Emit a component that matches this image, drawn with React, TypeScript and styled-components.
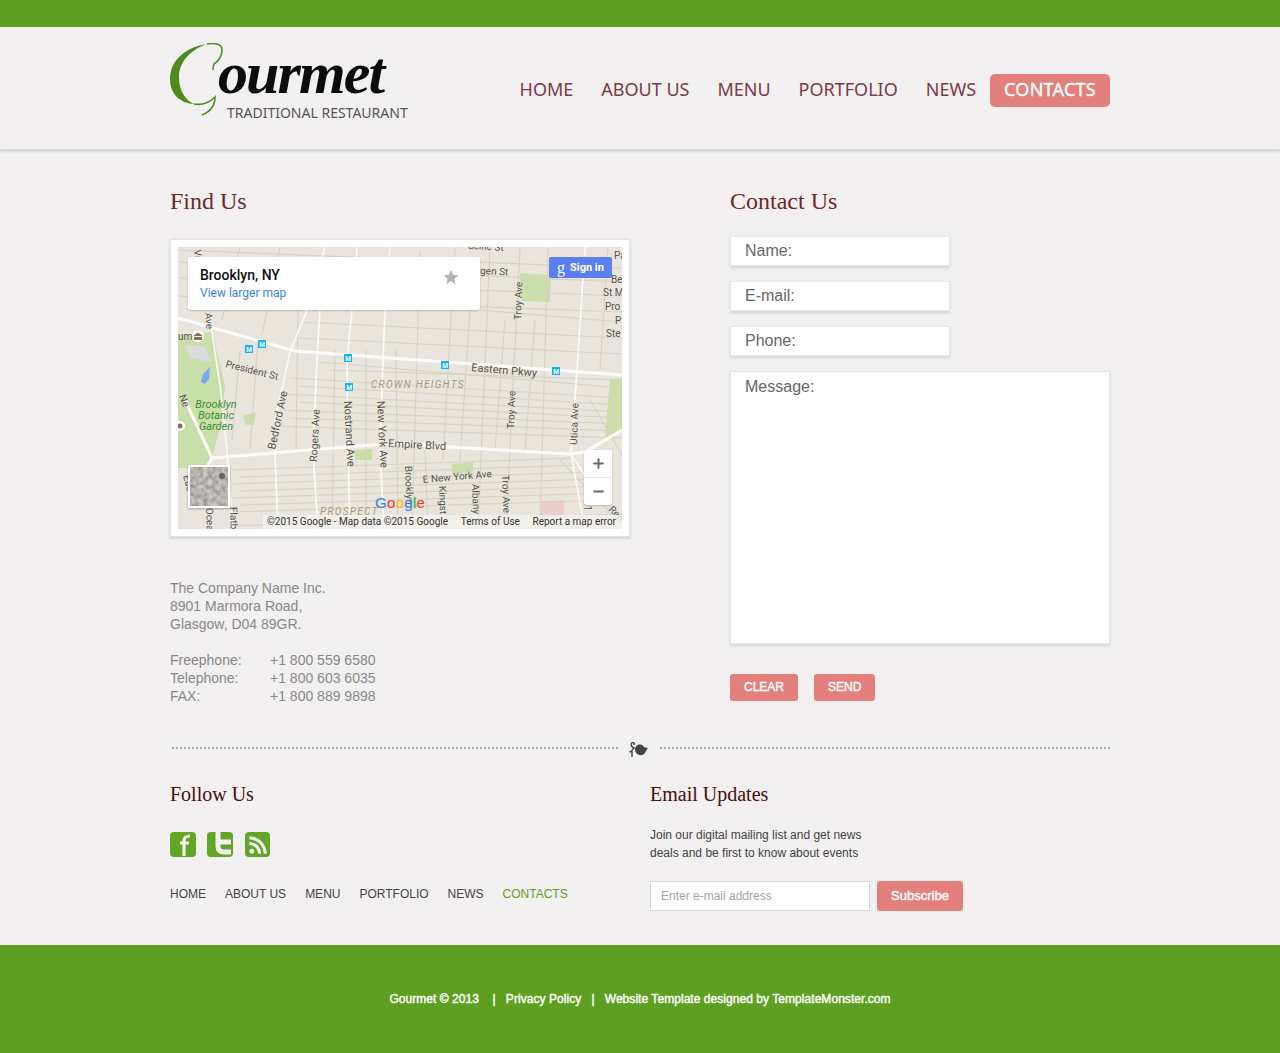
import * as React from 'react';
import styled, { createGlobalStyle } from 'styled-components';
import { Plus, Minus } from 'lucide-react';
import { FaRss } from 'react-icons/fa';

const GlobalStyle = createGlobalStyle`
  html, body {
    margin: 0;
    padding: 0;
    background: #f2f0f1;
    font-family: 'Liberation Sans', Arial, sans-serif;
  }
  * { box-sizing: border-box; }
`;

const TopBar = styled.div`
  height: 27px;
  background: #5e9f21;
`;

const Header = styled.header`
  height: 123px;
  background: #f2f0f1;
  border-bottom: 1px solid #e2e0e1;
  box-shadow: 0 1px 3px rgba(0, 0, 0, 0.18);
`;

const Wrap = styled.div`
  width: 940px;
  margin: 0 auto;
`;

const HeaderRow = styled(Wrap)`
  display: flex;
  justify-content: space-between;
  align-items: flex-start;
`;

const Logo = styled.div`
  position: relative;
  width: 240px;
  height: 94px;
  padding: 16px 0 0 48px;
`;

const LogoSwash = styled.svg`
  position: absolute;
  left: 0;
  top: 16px;
`;

const LogoName = styled.div`
  font: italic bold 60px/60px 'Liberation Serif', 'Times New Roman', serif;
  letter-spacing: -1.9px;
  color: #0c0c0c;
`;

const LogoTag = styled.div`
  margin: 1px 0 0 9px;
  font: 14px/18px 'Noto Sans', sans-serif;
  color: #555;
  white-space: nowrap;
`;

const Nav = styled.nav`
  display: flex;
  margin-top: 47px;
`;

const NavItem = styled.a<{ $active?: boolean }>`
  height: 33px;
  padding: 0 14px;
  font: 18px/31px 'Noto Sans', sans-serif;
  color: ${p => (p.$active ? '#fff' : '#7b3a45')};
  background: ${p => (p.$active ? '#e3807d' : 'transparent')};
  border-radius: 5px;
  white-space: nowrap;
  letter-spacing: ${p => (p.$active ? '0.25px' : '0')};
  -webkit-text-stroke: ${p => (p.$active ? '0.35px #fff' : '0')};
`;

const Columns = styled(Wrap)`
  display: flex;
  justify-content: space-between;
  padding-top: 36px;
`;

const LeftColumn = styled.section`
  width: 460px;
`;

const RightColumn = styled.section`
  width: 380px;
`;

const Heading = styled.h2<{ $small?: boolean }>`
  margin: 0;
  font: ${p => (p.$small ? '20px/26px' : '24px/30px')} 'Liberation Serif', 'Times New Roman', serif;
  color: ${p => (p.$small ? '#4a0d0d' : '#6b2a28')};
`;

const MapFrame = styled.div`
  position: relative;
  margin-top: 23px;
  width: 460px;
  height: 298px;
  padding: 7px;
  background: #fff;
  border: 1px solid #e6e4e5;
  box-shadow: 0 1px 3px rgba(0, 0, 0, 0.16);
`;

const MapSvg = styled.svg`
  display: block;
  width: 444px;
  height: 282px;
  background: #e9e5dc;
`;

const PlaceCard = styled.div`
  position: absolute;
  left: 17px;
  top: 17px;
  width: 292px;
  height: 53px;
  padding: 9px 12px;
  background: #fff;
  border-radius: 2px;
  box-shadow: 0 1px 2px rgba(0, 0, 0, 0.2);
  font-family: Roboto, sans-serif;
`;

const PlaceTitle = styled.div`
  font-size: 14px;
  line-height: 18px;
  font-weight: 500;
  color: #111;
`;

const PlaceLink = styled.div`
  margin-top: 1px;
  font-size: 12px;
  line-height: 16px;
  color: #3a84df;
`;

const PlaceStar = styled.svg`
  position: absolute;
  right: 21px;
  top: 12px;
`;

const SignIn = styled.div`
  position: absolute;
  left: 378px;
  top: 17px;
  width: 63px;
  height: 21px;
  display: flex;
  align-items: center;
  padding-left: 8px;
  gap: 5px;
  background: #5b7ff0;
  border-radius: 2px;
  color: #fff;
  font: bold 11px/21px Roboto, sans-serif;
`;

const SignInG = styled.span`
  font: 16px/19px 'Liberation Serif', serif;
`;

const ZoomControl = styled.div`
  position: absolute;
  left: 413px;
  top: 210px;
  width: 28px;
  height: 55px;
  display: flex;
  flex-direction: column;
  background: #fff;
  border-radius: 2px;
  box-shadow: 0 1px 2px rgba(0, 0, 0, 0.2);
`;

const ZoomButton = styled.div<{ $top?: boolean }>`
  flex: 1;
  display: flex;
  align-items: center;
  justify-content: center;
  color: #666;
  border-bottom: ${p => (p.$top ? '1px solid #e6e6e6' : 'none')};
`;

const Thumb = styled.svg`
  position: absolute;
  left: 17px;
  top: 225px;
  width: 42px;
  height: 43px;
  border: 2px solid #fff;
  box-shadow: 0 1px 2px rgba(0, 0, 0, 0.3);
`;

const GoogleMark = styled.div`
  position: absolute;
  left: 204px;
  top: 254px;
  font: 15px/18px 'Liberation Sans', sans-serif;
  letter-spacing: 0.3px;
  -webkit-text-stroke: 0.2px currentColor;
`;

const GoogleLetter = styled.span<{ $color: string }>`
  color: ${p => p.$color};
`;

const Attribution = styled.div`
  position: absolute;
  left: 92px;
  top: 275px;
  width: 359px;
  height: 14px;
  padding: 0 6px 0 4px;
  display: flex;
  justify-content: space-between;
  background: rgba(245, 244, 240, 0.78);
  font: 10px/14px Roboto, sans-serif;
  color: #333;
  white-space: nowrap;
`;

const Address = styled.p`
  margin: 42px 0 0;
  font-size: 14px;
  line-height: 18px;
  color: #888;
`;

const PhoneRow = styled.div`
  display: flex;
  font-size: 14px;
  line-height: 18px;
  color: #888;
`;

const PhoneList = styled.div`
  margin-top: 18px;
`;

const PhoneLabel = styled.span`
  width: 100px;
`;

const Field = styled.div<{ $tall?: boolean }>`
  width: ${p => (p.$tall ? '380px' : '220px')};
  height: ${p => (p.$tall ? '273px' : '30px')};
  margin-bottom: 15px;
  padding: ${p => (p.$tall ? '6px' : '5px')} 14px;
  background: #fff;
  border: 1px solid #e8e6e7;
  box-shadow: 0 2px 3px rgba(0, 0, 0, 0.12);
  font-size: 16px;
  line-height: 18px;
  color: #666;
`;

const Form = styled.div`
  margin-top: 20px;
`;

const FormButtons = styled.div`
  display: flex;
  gap: 16px;
  margin-top: 30px;
`;

const SmallButton = styled.div`
  height: 27px;
  padding: 0 14px;
  background: #e3807d;
  border-radius: 3px;
  color: #fff;
  font-size: 12px;
  line-height: 27px;
  -webkit-text-stroke: 0.4px #fff;
`;

const Divider = styled(Wrap)`
  display: flex;
  align-items: center;
  height: 18px;
  margin-top: 34px;
  padding-left: 2px;
`;

const DottedLine = styled.div<{ $fixed?: boolean }>`
  flex: ${p => (p.$fixed ? '0 0 446px' : '1')};
  border-top: 2px dotted #aaa;
`;

const Ornament = styled.svg`
  margin: 4px 12px 0 11px;
  flex: none;
`;

const BottomRow = styled(Wrap)`
  display: flex;
  margin-top: 24px;
`;

const FollowColumn = styled.section`
  width: 480px;
`;

const EmailColumn = styled.section`
  width: 460px;
`;

const SocialRow = styled.div`
  display: flex;
  gap: 11px;
  margin-top: 25px;
`;

const SocialIcon = styled.div`
  width: 26px;
  height: 25px;
  display: flex;
  align-items: center;
  justify-content: center;
  background: #63a525;
  border-radius: 4px;
  color: #f2f0f1;

  &:last-child {
    width: 25px;
    margin-left: 1px;
  }
`;

const FooterNav = styled.nav`
  display: flex;
  gap: 19px;
  margin-top: 29px;
`;

const FooterLink = styled.a<{ $active?: boolean }>`
  font-size: 12px;
  line-height: 16px;
  color: ${p => (p.$active ? '#5e9f21' : '#444')};
`;

const EmailText = styled.p`
  margin: 19px 0 0;
  font-size: 12px;
  line-height: 18px;
  color: #444;
`;

const SubscribeRow = styled.div`
  display: flex;
  gap: 7px;
  margin-top: 19px;
`;

const EmailInput = styled.div`
  width: 220px;
  height: 30px;
  padding: 0 10px;
  background: #fff;
  border: 1px solid #d8d6d7;
  font-size: 12px;
  line-height: 28px;
  color: #a5a5a5;
`;

const SubscribeButton = styled.div`
  width: 86px;
  height: 30px;
  background: #e3807d;
  border-radius: 3px;
  color: #fff;
  font-size: 13px;
  line-height: 29px;
  text-align: center;
  -webkit-text-stroke: 0.4px #fff;
`;

const Footer = styled.footer`
  display: flex;
  align-items: center;
  justify-content: center;
  height: 108px;
  margin-top: 34px;
  background: #5e9f21;
  color: #fff;
  font-size: 12px;
  letter-spacing: 0.05px;
  -webkit-text-stroke: 0.4px #fff;
  white-space: pre;
`;

const minorStreets = [
  'M178 262 L622 282', 'M178 278 L622 296', 'M178 296 L622 312', 'M300 322 L622 338', 'M300 338 L622 354',
  'M320 362 L622 388', 'M290 378 L622 398', 'M285 394 L622 412', 'M280 410 L622 424', 'M275 426 L622 438',
  'M232 470 L575 458', 'M232 484 L590 472', 'M232 498 L600 486', 'M232 512 L610 500', 'M232 526 L622 514',
  'M178 250 L622 268', 'M480 310 L622 322', 'M330 370 L622 380', 'M300 386 L622 405', 'M300 402 L622 418',
  'M290 418 L622 431', 'M240 477 L580 465', 'M240 491 L595 479', 'M240 505 L605 493',
  'M420 250 L412 529', 'M455 247 L443 460', 'M490 247 L478 529', 'M520 247 L506 529', 'M548 247 L540 529',
  'M608 247 L600 370', 'M240 350 L232 440', 'M258 340 L250 450', 'M298 310 L296 450', 'M335 350 L332 529',
  'M366 350 L366 529', 'M396 350 L398 529', 'M240 247 L222 320', 'M280 247 L262 335', 'M425 450 L428 529',
  'M560 460 L622 525', 'M590 400 L622 455', 'M470 310 L460 460', 'M505 320 L495 450', 'M535 320 L525 450',
];

const majorStreets = [
  'M325 247 L307 310 L290 352 L275 420 L275 455 L278 529',
  'M320 310 L317 360 L313 452 L318 529',
  'M357 247 L352 310 L347 360 L348 450 L350 529',
  'M390 247 L385 310 L383 360 L380 450 L384 529',
  'M585 247 L577 370 L571 454 L585 529',
  'M571 454 L594 490',
  'M210 320 L220 385 L226 440 L233 529',
];

const wideStreets = [
  'M178 318 L295 351 L622 375',
  'M185 400 L212 458 L205 470',
  'M212 458 L395 443 L450 447 L570 454 L585 452 L622 430',
];

const subwayStops: [number, number][] = [
  [249, 349], [262, 344], [348, 358], [445, 365], [556, 371], [349, 387],
];

const mapLabels: { text: string; x: number; y: number; r: number; color?: string; size?: number; italic?: boolean }[] = [
  { text: 'President St', x: 225, y: 367, r: 14 },
  { text: 'Eastern Pkwy', x: 471, y: 371, r: 5, size: 11 },
  { text: 'CROWN HEIGHTS', x: 371, y: 388, r: 0, color: '#a39a7c', italic: true },
  { text: 'Empire Blvd', x: 388, y: 447, r: 3, size: 11 },
  { text: 'E New York Ave', x: 423, y: 483, r: -5 },
  { text: 'Bedford Ave', x: 275, y: 450, r: -78, size: 11 },
  { text: 'Rogers Ave', x: 317, y: 462, r: -87, size: 10.5 },
  { text: 'Nostrand Ave', x: 344, y: 401, r: 87, size: 11 },
  { text: 'New York Ave', x: 377, y: 401, r: 87, size: 11 },
  { text: 'Brooklyn', x: 405, y: 466, r: 88 },
  { text: 'Kingst', x: 439, y: 486, r: 88 },
  { text: 'Albany', x: 472, y: 484, r: 88 },
  { text: 'Troy Ave', x: 502, y: 475, r: 88 },
  { text: 'Troy Ave', x: 514, y: 429, r: -88 },
  { text: 'Troy Ave', x: 521, y: 320, r: -88 },
  { text: 'Utica Ave', x: 577, y: 445, r: -88 },
  { text: 'gen St', x: 480, y: 274, r: 3 },
  { text: 'acific St', x: 468, y: 249, r: 3 },
  { text: 'PROSPECT', x: 320, y: 515, r: 0, color: '#a39a7c', italic: true },
  { text: 'Flatb', x: 230, y: 507, r: 88 },
  { text: 'Ocea', x: 206, y: 508, r: 88 },
  { text: 'Eas', x: 183, y: 476, r: 75 },
  { text: 'Ne', x: 179, y: 396, r: 70 },
  { text: 'Be', x: 611, y: 283, r: 0 },
  { text: 'St M', x: 603, y: 296, r: 0 },
  { text: 'Pro', x: 605, y: 310, r: 0 },
  { text: 'Ste', x: 606, y: 337, r: 0 },
  { text: 'Pa', x: 614, y: 259, r: 0 },
  { text: 'P', x: 615, y: 324, r: 0 },
  { text: 'Ave', x: 205, y: 313, r: 85 },
  { text: 'Va', x: 194, y: 250, r: 85 },
  { text: 'um', x: 178, y: 340, r: 0 },
  { text: 'Ren', x: 608, y: 510, r: 45 },
  { text: '51', x: 584, y: 500, r: 90 },
];

const CityMap = () => (
  <MapSvg viewBox="178 247 444 282">
    <path d="M178 335 L212 332 L225 385 L222 420 L212 458 L205 468 L178 468 Z" fill="#c9dfa9" />
    <path d="M185 345 L205 347 L212 362 L190 358 Z" fill="#dcdcdc" />
    <path d="M201 382 L203 374 L210 367 L209 379 L205 384 Z" fill="#7ea6ea" />
    <path d="M520 273 L551 275 L550 302 L521 301 Z" fill="#cbdea8" />
    <path d="M610 380 L622 378 L622 432 L605 438 Z" fill="#cbdea8" />
    <path d="M452 464 L473 462 L473 472 L452 474 Z" fill="#cbdea8" />
    <path d="M355 450 L372 449 L372 460 L355 460 Z" fill="#cbdea8" />
    <path d="M243 415 L256 413 L254 425 L246 425 Z" fill="#cbdea8" />
    <path d="M541 501 L564 500 L564 516 L541 516 Z" fill="#eccfcd" />
    {minorStreets.map(d => (
      <path key={d} d={d} stroke="#d8d2c5" strokeWidth={1.2} fill="none" />
    ))}
    {majorStreets.map(d => (
      <path key={d} d={d} stroke="#fbfaf7" strokeWidth={1.6} fill="none" />
    ))}
    {wideStreets.map(d => (
      <path key={d} d={d} stroke="#fdfcfa" strokeWidth={3} fill="none" />
    ))}
    <circle cx={198} cy={336} r={6} fill="#fff" />
    <path d="M193 336 L198 332.5 L203 336 Z M194 337 H202 V340 H194 Z" fill="#8c6b5e" />
    <circle cx={180} cy={426} r={5} fill="#fff" />
    <circle cx={180} cy={426} r={2.5} fill="#8c6b5e" />
    {subwayStops.map(([x, y]) => (
      <g key={`${x}-${y}`}>
        <rect x={x - 4} y={y - 4} width={8} height={8} fill="#12b5f2" />
        <text x={x} y={y + 2.5} fontSize={6.5} fontWeight="bold" fill="#fff" textAnchor="middle" fontFamily="Roboto, sans-serif">M</text>
      </g>
    ))}
    {mapLabels.map(l => (
      <text
        key={`${l.text}-${l.x}`}
        transform={`translate(${l.x} ${l.y}) rotate(${l.r})`}
        fontFamily="Roboto, sans-serif"
        fontSize={l.size || 10}
        fontStyle={l.italic ? 'italic' : 'normal'}
        letterSpacing={l.italic ? 1.3 : 0}
        fill={l.color || '#55524a'}
        stroke="#f1eee7"
        strokeWidth={0.4}
        paintOrder="stroke"
      >
        {l.text}
      </text>
    ))}
    <text fontFamily="Roboto, sans-serif" fontSize={11} fontStyle="italic" fill="#3f8b32" textAnchor="middle">
      <tspan x={216} y={408}>Brooklyn</tspan>
      <tspan x={216} y={419}>Botanic</tspan>
      <tspan x={216} y={430}>Garden</tspan>
    </text>
  </MapSvg>
);

const SatelliteThumb = () => (
  <Thumb viewBox="0 0 38 39">
    <filter id="grain">
      <feTurbulence type="fractalNoise" baseFrequency="0.22" numOctaves={3} seed={4} />
      <feColorMatrix type="matrix" values="0.55 0 0 0 0.2  0.5 0 0 0 0.2  0.48 0 0 0 0.19  0 0 0 0 1" />
    </filter>
    <rect width={38} height={39} filter="url(#grain)" />
    <circle cx={32} cy={9} r={3} fill="#4c5146" opacity={0.8} />
  </Thumb>
);

const App = () => (
  <>
    <GlobalStyle />
    <TopBar />
    <Header>
      <HeaderRow>
        <Logo aria-label="Gourmet">
          <LogoSwash width={60} height={76} viewBox="0 0 60 76">
            <path d="M37 1 C15 4 0 18 0 36 C0 50 9 60 24 61 C15 57 9 47 9 34 C9 18 22 6 37 1 Z" fill="#4f8a1c" />
            <path d="M37 1 C44 0 52 0 52 7 C52 13 50 17 44 21 C43 23 43 25 43 27" stroke="#4f8a1c" strokeWidth={1.6} fill="none" />
            <path d="M24 61 C30 62 38 61 45 54 C45 62 42 68 32 72" stroke="#4f8a1c" strokeWidth={1.6} fill="none" />
          </LogoSwash>
          <LogoName>ourmet</LogoName>
          <LogoTag>TRADITIONAL RESTAURANT</LogoTag>
        </Logo>
        <Nav>
          <NavItem>HOME</NavItem>
          <NavItem>ABOUT US</NavItem>
          <NavItem>MENU</NavItem>
          <NavItem>PORTFOLIO</NavItem>
          <NavItem>NEWS</NavItem>
          <NavItem $active>CONTACTS</NavItem>
        </Nav>
      </HeaderRow>
    </Header>

    <Columns>
      <LeftColumn>
        <Heading>Find Us</Heading>
        <MapFrame>
          <CityMap />
          <PlaceCard>
            <PlaceTitle>Brooklyn, NY</PlaceTitle>
            <PlaceLink>View larger map</PlaceLink>
            <PlaceStar width={16} height={16} viewBox="0 0 24 24">
              <path d="M12 1 L15.2 8.6 L23.4 9.3 L17.2 14.7 L19 22.8 L12 18.5 L5 22.8 L6.8 14.7 L0.6 9.3 L8.8 8.6 Z" fill="#b4b4b4" />
            </PlaceStar>
          </PlaceCard>
          <SignIn>
            <SignInG>g</SignInG>
            Sign in
          </SignIn>
          <ZoomControl>
            <ZoomButton $top>
              <Plus size={15} strokeWidth={3} />
            </ZoomButton>
            <ZoomButton>
              <Minus size={15} strokeWidth={3} />
            </ZoomButton>
          </ZoomControl>
          <SatelliteThumb />
          <GoogleMark>
            <GoogleLetter $color="#4285f4">G</GoogleLetter>
            <GoogleLetter $color="#ea4335">o</GoogleLetter>
            <GoogleLetter $color="#fbbc05">o</GoogleLetter>
            <GoogleLetter $color="#4285f4">g</GoogleLetter>
            <GoogleLetter $color="#34a853">l</GoogleLetter>
            <GoogleLetter $color="#ea4335">e</GoogleLetter>
          </GoogleMark>
          <Attribution>
            <span>©2015 Google - Map data ©2015 Google</span>
            <span>Terms of Use</span>
            <span>Report a map error</span>
          </Attribution>
        </MapFrame>
        <Address>
          The Company Name Inc.
          <br />
          8901 Marmora Road,
          <br />
          Glasgow, D04 89GR.
        </Address>
        <PhoneList>
          <PhoneRow>
            <PhoneLabel>Freephone:</PhoneLabel>
            +1 800 559 6580
          </PhoneRow>
          <PhoneRow>
            <PhoneLabel>Telephone:</PhoneLabel>
            +1 800 603 6035
          </PhoneRow>
          <PhoneRow>
            <PhoneLabel>FAX:</PhoneLabel>
            +1 800 889 9898
          </PhoneRow>
        </PhoneList>
      </LeftColumn>
      <RightColumn>
        <Heading>Contact Us</Heading>
        <Form>
          <Field>Name:</Field>
          <Field>E-mail:</Field>
          <Field>Phone:</Field>
          <Field $tall>Message:</Field>
          <FormButtons>
            <SmallButton>CLEAR</SmallButton>
            <SmallButton>SEND</SmallButton>
          </FormButtons>
        </Form>
      </RightColumn>
    </Columns>

    <Divider>
      <DottedLine $fixed />
      <Ornament width={19} height={16} viewBox="0 0 19 16">
        <path d="M6 8 C6 3 11 1 14 4 C15 5 17 6 19 6 C18 7 17.5 8 16.5 10 C14 15 7 14 6 8 Z" fill="#444" />
        <path d="M3 15 L3 8 M3 9 L0.5 10 M3 8 L5 6 C2 5 1.5 2 3 0.8 C5 0 6 2 4.5 3" stroke="#444" strokeWidth={1.4} fill="none" />
      </Ornament>
      <DottedLine />
    </Divider>

    <BottomRow>
      <FollowColumn>
        <Heading $small>Follow Us</Heading>
        <SocialRow>
          <SocialIcon>
            <svg width={26} height={25} viewBox="0 0 26 25">
              <path d="M14 24 V9 C14 5 16 4 20 4 M10 11 H19" stroke="currentColor" strokeWidth={3.2} fill="none" />
            </svg>
          </SocialIcon>
          <SocialIcon>
            <svg width={26} height={25} viewBox="0 0 26 25">
              <path d="M11 0 V14 Q11 20 17 20 H24 M11 10 H24" stroke="currentColor" strokeWidth={5} fill="none" />
            </svg>
          </SocialIcon>
          <SocialIcon>
            <FaRss size={20} />
          </SocialIcon>
        </SocialRow>
        <FooterNav>
          <FooterLink>HOME</FooterLink>
          <FooterLink>ABOUT US</FooterLink>
          <FooterLink>MENU</FooterLink>
          <FooterLink>PORTFOLIO</FooterLink>
          <FooterLink>NEWS</FooterLink>
          <FooterLink $active>CONTACTS</FooterLink>
        </FooterNav>
      </FollowColumn>
      <EmailColumn>
        <Heading $small>Email Updates</Heading>
        <EmailText>
          Join our digital mailing list and get news
          <br />
          deals and be first to know about events
        </EmailText>
        <SubscribeRow>
          <EmailInput>Enter e-mail address</EmailInput>
          <SubscribeButton>Subscribe</SubscribeButton>
        </SubscribeRow>
      </EmailColumn>
    </BottomRow>

    <Footer>Gourmet © 2013{'    |   '}Privacy Policy{'   |   '}Website Template designed by TemplateMonster.com</Footer>
  </>
);

export default App;
